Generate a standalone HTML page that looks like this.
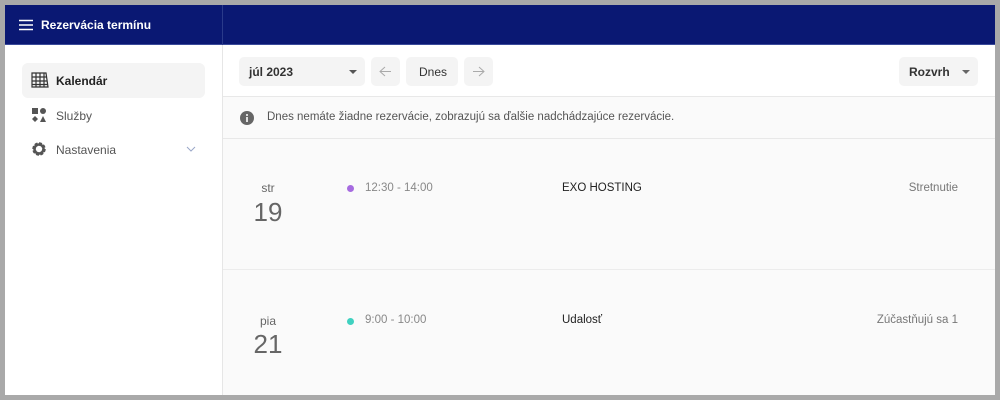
<!DOCTYPE html>
<html><head><meta charset="utf-8"><style>
*{box-sizing:border-box;margin:0;padding:0}
body{width:1000px;height:400px;background:#a9a9a9;font-family:"Liberation Sans",sans-serif;position:relative;overflow:hidden}
.app{position:absolute;left:5px;top:5px;width:990px;height:390px;background:#fafafa;overflow:hidden}
.hdr{position:absolute;left:0;top:0;width:990px;height:40px;background:#0a1873;border-bottom:1px solid #3a4a9a}
.hdr .sep{position:absolute;left:217px;top:0;width:1px;height:40px;background:#2a3a8a}
.hdr .t{position:absolute;left:36px;top:13px;color:#fff;font-size:12px;font-weight:bold}
.side{position:absolute;left:0;top:40px;width:218px;height:350px;background:#fff;border-right:1px solid #e6e6e6}
.item{position:absolute;left:17px;width:183px;height:35px;border-radius:6px;font-size:12px;color:#555}
.item span{position:absolute;left:34px;top:11px}
.item svg{position:absolute;left:9px;top:9px}
.tb{position:absolute;left:218px;top:40px;width:772px;height:52px;background:#fff;border-bottom:1px solid #e8e8e8}
.btn{position:absolute;top:12px;height:29px;background:#f4f4f4;border-radius:5px;font-size:12px;color:#333}
.info{position:absolute;left:218px;top:92px;width:772px;height:42px;border-bottom:1px solid #e8e8e8;font-size:11.5px;color:#555}
.row{position:absolute;left:218px;width:772px;font-size:11.5px}
.dow{position:absolute;left:0;width:90px;text-align:center;color:#666;font-size:12px}
.day{position:absolute;left:0;width:90px;text-align:center;color:#666;font-size:26px}
</style></head><body><div class="app">
<div class="hdr"><div class="sep"></div>
<svg style="position:absolute;left:14px;top:14px" width="14" height="12"><path d="M0 1.5H14M0 6H14M0 10.5H14" stroke="#fff" stroke-width="1.4"/></svg>
<div class="t">Rezervácia termínu</div></div>
<div class="side">
<div class="item" style="top:18px;background:#f4f4f4;color:#222;font-weight:bold"><svg width="18" height="16" viewBox="0 0 18 16"><path d="M1 1H15L17 15H1ZM1 5H16M1 9H16.5M1 12.5H17M5 1V15M9 1V15M13 1V15" stroke="#333" fill="none" stroke-width="1.2"/></svg><span>Kalendár</span></div>
<div class="item" style="top:53px"><svg width="16" height="16"><rect x="1" y="1" width="6" height="6" fill="#555"/><circle cx="12" cy="4" r="3" fill="#555"/><path d="M4 9L7 12L4 15L1 12Z" fill="#555"/><path d="M12 9L15 15H9Z" fill="#555"/></svg><span>Služby</span></div>
<div class="item" style="top:87px"><svg width="16" height="16" viewBox="0 0 16 16"><circle cx="8" cy="8" r="5" fill="none" stroke="#555" stroke-width="3.5" stroke-dasharray="2.6 1.3"/><circle cx="8" cy="8" r="4.5" fill="none" stroke="#555" stroke-width="2.5"/><circle cx="8" cy="8" r="2" fill="#fff"/></svg><span>Nastavenia</span>
<svg style="left:164px;top:14px" width="10" height="6"><path d="M1 1L5 5L9 1" stroke="#9aa7c8" fill="none"/></svg></div>
</div>
<div class="tb">
<div class="btn" style="left:16px;width:126px"><b style="position:absolute;left:10px;top:8px">júl 2023</b><div style="position:absolute;right:8px;top:13px;border:4px solid transparent;border-top:4px solid #555;border-bottom:0"></div></div>
<div class="btn" style="left:148px;width:29px"><svg style="position:absolute;left:8px;top:9px" width="13" height="11"><path d="M12 5.5H1M6 1L1 5.5L6 10" stroke="#aaa" fill="none"/></svg></div>
<div class="btn" style="left:183px;width:52px"><span style="position:absolute;left:13px;top:8px">Dnes</span></div>
<div class="btn" style="left:241px;width:29px"><svg style="position:absolute;left:8px;top:9px" width="13" height="11"><path d="M1 5.5H12M7 1L12 5.5L7 10" stroke="#aaa" fill="none"/></svg></div>
<div class="btn" style="left:676px;width:79px"><b style="position:absolute;left:10px;top:8px">Rozvrh</b><div style="position:absolute;right:8px;top:13px;border:4px solid transparent;border-top:4px solid #666;border-bottom:0"></div></div>
</div>
<div class="info"><svg style="position:absolute;left:17px;top:14px" width="14" height="14"><circle cx="7" cy="7" r="7" fill="#666"/><rect x="6.2" y="6" width="1.6" height="5" fill="#fff"/><circle cx="7" cy="4" r="1" fill="#fff"/></svg><span style="position:absolute;left:44px;top:14px">Dnes nemáte žiadne rezervácie, zobrazujú sa ďalšie nadchádzajúce rezervácie.</span></div>
<div class="row" style="top:134px;height:131px;border-bottom:1px solid #ececec">
<div class="dow" style="top:42px">str</div><div class="day" style="top:58px">19</div>
<div style="position:absolute;left:124px;top:46px;width:7px;height:7px;border-radius:50%;background:#a66be0"></div>
<div style="position:absolute;left:142px;top:43px;color:#888">12:30 - 14:00</div>
<div style="position:absolute;left:339px;top:43px;color:#222">EXO HOSTING</div>
<div style="position:absolute;right:37px;top:43px;color:#777">Stretnutie</div>
</div>
<div class="row" style="top:266px;height:124px">
<div class="dow" style="top:43px">pia</div><div class="day" style="top:58px">21</div>
<div style="position:absolute;left:124px;top:47px;width:7px;height:7px;border-radius:50%;background:#3fd1c0"></div>
<div style="position:absolute;left:142px;top:43px;color:#888">9:00 - 10:00</div>
<div style="position:absolute;left:339px;top:43px;color:#222">Udalosť</div>
<div style="position:absolute;right:37px;top:43px;color:#777">Zúčastňujú sa 1</div>
</div>
</div></body></html>
